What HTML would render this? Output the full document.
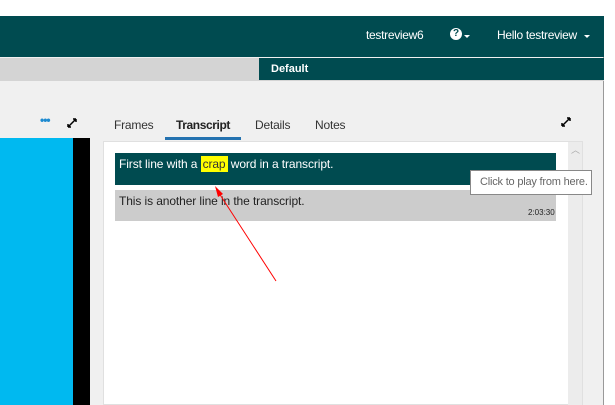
<!DOCTYPE html>
<html><head><style>
*{margin:0;padding:0;box-sizing:border-box}
body{width:615px;height:405px;overflow:hidden;background:#fff;font-family:"Liberation Sans",sans-serif;position:relative}
div{position:absolute}
.t{white-space:nowrap}
</style></head><body>
<div style="left:0;top:16px;width:604px;height:389px;background:#f0f0f0;border-right:1px solid #999"></div>
<div style="left:0;top:16px;width:604px;height:41px;background:#004b50"></div>
<div class="t" style="left:366px;top:28px;color:#fff;font-size:12px;letter-spacing:-0.3px">testreview6</div>
<div style="left:450px;top:28px;width:12px;height:12px;border-radius:50%;background:#fff;color:#004b50;font-size:10px;font-weight:bold;text-align:center;line-height:12px">?</div>
<div style="left:464px;top:35px;border:3px solid transparent;border-top:3px solid #fff;border-bottom:0"></div>
<div class="t" style="left:497px;top:28px;color:#fff;font-size:12px;letter-spacing:-0.3px">Hello testreview</div>
<div style="left:584px;top:35px;border:3px solid transparent;border-top:3px solid #fff;border-bottom:0"></div>
<div style="left:0;top:58px;width:604px;height:23px;background:#d4d4d4"></div>
<div style="left:259px;top:58px;width:345px;height:22px;background:#004b50"></div>
<div class="t" style="left:271px;top:63px;color:#fff;font-size:11px;font-weight:bold">Default</div>
<div class="t" style="left:40px;top:113px;color:#1e8ad0;font-size:12px;font-weight:bold;letter-spacing:-1px">•••</div>
<svg style="position:absolute;left:66px;top:117px" width="12" height="12"><path d="M2 10L10 2M2 10v-3M2 10h3M10 2v3M10 2h-3" stroke="#000" stroke-width="1.5" fill="none"/></svg>
<svg style="position:absolute;left:560px;top:116px" width="12" height="12"><path d="M2 10L10 2M2 10v-3M2 10h3M10 2v3M10 2h-3" stroke="#000" stroke-width="1.5" fill="none"/></svg>
<div class="t" style="left:114px;top:118px;font-size:12px;color:#333;letter-spacing:-0.2px">Frames</div>
<div class="t" style="left:176px;top:118px;font-size:12px;color:#222;font-weight:bold;letter-spacing:-0.4px">Transcript</div>
<div class="t" style="left:255px;top:118px;font-size:12px;color:#333;letter-spacing:-0.2px">Details</div>
<div class="t" style="left:315px;top:118px;font-size:12px;color:#333;letter-spacing:-0.2px">Notes</div>
<div style="left:165px;top:137px;width:76px;height:3px;background:#2472b0"></div>
<div style="left:0;top:138px;width:73px;height:267px;background:#00b9f0"></div>
<div style="left:73px;top:138px;width:17px;height:267px;background:#000"></div>
<div style="left:103px;top:141px;width:480px;height:264px;background:#fff;border:1px solid #e0e0e0"></div>
<div style="left:568px;top:142px;width:14px;height:263px;background:#ececec"></div>
<div class="t" style="left:571px;top:143px;font-size:9px;color:#aaa">︿</div>
<div style="left:115px;top:153px;width:441px;height:32px;background:#004b50"></div>
<div class="t" style="left:119px;top:157px;color:#fff;font-size:12px;letter-spacing:-0.1px">First line with a <span style="background:#ffff00;color:#333;padding:1px 2px">crap</span> word in a transcript.</div>
<div style="left:115px;top:190px;width:441px;height:31px;background:#cccccc"></div>
<div class="t" style="left:119px;top:194px;color:#222;font-size:12px;letter-spacing:-0.1px">This is another line in the transcript.</div>
<div class="t" style="left:528px;top:208px;color:#222;font-size:8px">2:03:30</div>
<div style="left:470px;top:170px;width:122px;height:25px;background:#fff;border:1px solid #888"></div>
<div class="t" style="left:480px;top:176px;color:#666;font-size:11px;letter-spacing:-0.2px">Click to play from here.</div>
<svg style="position:absolute;left:0;top:0" width="615" height="405"><line x1="276" y1="281" x2="217" y2="190" stroke="#f00" stroke-width="1"/><polygon points="215,186 218,197 223,194" fill="#f00"/></svg>
</body></html>
